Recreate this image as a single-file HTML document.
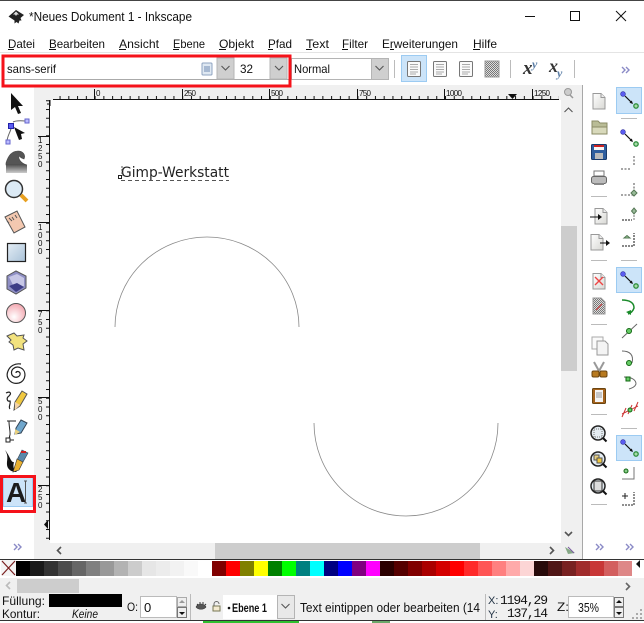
<!DOCTYPE html>
<html><head><meta charset="utf-8"><style>
html,body{margin:0;padding:0;width:644px;height:623px;overflow:hidden;background:#fff}
svg{display:block;filter:blur(.25px)}
text{font-family:"Liberation Sans",sans-serif;font-size:12px;fill:#111}
.m{font-size:12px}
.mono{font-family:"Liberation Mono",monospace;font-size:13px}
.r{font-size:8px;fill:#111}
</style></head><body>
<svg width="644" height="623" viewBox="0 0 644 623" xmlns="http://www.w3.org/2000/svg">
<defs>
<pattern id="tx" patternUnits="userSpaceOnUse" x="7" y="0" width="8.76" height="623"><rect x="0" y="96" width="1" height="3" fill="#111"/></pattern>
<pattern id="ty" patternUnits="userSpaceOnUse" x="0" y="4" width="644" height="8.75"><rect x="46" y="0" width="3" height="1" fill="#111"/></pattern>
<pattern id="chk" patternUnits="userSpaceOnUse" width="2" height="2"><rect width="2" height="2" fill="#ddd"/><rect width="1" height="1" fill="#777"/><rect x="1" y="1" width="1" height="1" fill="#777"/></pattern>
<linearGradient id="g1" x1="0" y1="0" x2="1" y2="1"><stop offset="0" stop-color="#fff"/><stop offset="1" stop-color="#d8d8d4"/></linearGradient>
<linearGradient id="g2" x1="0" y1="0" x2="1" y2="1"><stop offset="0" stop-color="#e4edf5"/><stop offset="1" stop-color="#a9c2d8"/></linearGradient>
<linearGradient id="g3" x1="0" y1="0" x2="0" y2="1"><stop offset="0" stop-color="#555"/><stop offset="1" stop-color="#ccc"/></linearGradient>
<radialGradient id="g4" cx=".4" cy=".7" r=".8"><stop offset="0" stop-color="#fff"/><stop offset="1" stop-color="#f29ca6"/></radialGradient>
<g id="cc"><path d="M0 0l3 3-3 3M4 0l3 3-3 3" fill="none" stroke="#8a8ac6" stroke-width="1.4"/></g>
<g id="chev"><path d="M-4 -2l4 4 4-4" fill="none" stroke="#555" stroke-width="1.1"/></g>
<g id="align"><rect x="-6.500" y="-7.500" width="13" height="15" rx="1" fill="#fafafa" stroke="#777"/><path d="M-4-4.500h8M-4-2h8M-4 .5h8M-4 3h8M-4 5h6" stroke="#aaa"/></g>
<g id="nd"><circle cx="-6" cy="-6" r="2.400" fill="#5a5cf0" stroke="#3535a0" stroke-width=".6"/><path d="M-4-4L3 3" stroke="#111" stroke-width="1.200"/><path d="M4 4L.5 2.800 2.800 .5z" fill="#111"/><circle cx="7" cy="6" r="2.200" fill="#a8dca8" stroke="#2f8f3f" stroke-width="1.300"/></g>
<g id="mg"><circle r="7" fill="#e4ecf2" stroke="#222" stroke-width="1.500"/><path d="M5 5l3.500 3.500" stroke="#111" stroke-width="2"/></g>
<g id="doc"><path d="M-6-7.500h8l4 4v11.500h-12z" fill="url(#g1)" stroke="#999"/><path d="M2-7.500v4h4" fill="#eee" stroke="#999"/></g>
</defs>

<!-- chrome -->
<rect x="0" y="0" width="644" height="1" fill="#444"/>
<!-- title -->
<path d="M16 10l8 5-3.500 3 1 2.500-2 0-1 3-2-1.500-2 1.500 0-3-3-2-3-2z" fill="#222"/><path d="M16 11.500l3 3-2 0-1 1.500-1-1.500-2 0z" fill="#ddd"/>
<text x="29" y="21" font-size="13" style="font-size:13px" textLength="163" lengthAdjust="spacingAndGlyphs">*Neues Dokument 1 - Inkscape</text>
<path d="M525 16.500h10" stroke="#111"/><rect x="570.500" y="11.500" width="9" height="9" fill="none" stroke="#111"/><path d="M616 11l10 10M626 11l-10 10" stroke="#111"/>
<!-- menu -->
<g class="m">
<text x="8" y="48" textLength="27" lengthAdjust="spacingAndGlyphs">Datei</text>
<text x="49" y="48" textLength="56" lengthAdjust="spacingAndGlyphs">Bearbeiten</text>
<text x="119" y="48" textLength="40" lengthAdjust="spacingAndGlyphs">Ansicht</text>
<text x="173" y="48" textLength="32" lengthAdjust="spacingAndGlyphs">Ebene</text>
<text x="219" y="48" textLength="35" lengthAdjust="spacingAndGlyphs">Objekt</text>
<text x="268" y="48" textLength="24" lengthAdjust="spacingAndGlyphs">Pfad</text>
<text x="306" y="48" textLength="23" lengthAdjust="spacingAndGlyphs">Text</text>
<text x="342" y="48" textLength="26" lengthAdjust="spacingAndGlyphs">Filter</text>
<text x="382" y="48" textLength="76" lengthAdjust="spacingAndGlyphs">Erweiterungen</text>
<text x="473" y="48" textLength="24" lengthAdjust="spacingAndGlyphs">Hilfe</text>
</g>
<path d="M8 49.500h6M49 49.500h7M119 49.500h7M173 49.500h6M219 49.500h7M268 49.500h5M306 49.500h6M342 49.500h6M390 49.500h4M473 49.500h7" stroke="#111"/>
<rect x="0" y="52" width="644" height="1" fill="#e4e4e4"/>

<!-- text toolbar -->
<rect x="5" y="58" width="212" height="21" fill="#fff"/>
<rect x="4" y="79" width="285" height="1" fill="#aaa"/>
<text x="7" y="73" textLength="49" lengthAdjust="spacingAndGlyphs">sans-serif</text>
<rect x="202" y="63" width="10" height="12" rx="1" fill="#dfe8f2" stroke="#8fa3c0"/><path d="M204 67h6M204 69h6M204 71h6" stroke="#6f8ab2"/>
<rect x="217" y="58" width="17" height="21" fill="#cfcfcf" stroke="#b4b4b4"/><use href="#chev" x="225.500" y="68"/>
<text x="240" y="73" textLength="13" lengthAdjust="spacingAndGlyphs">32</text>
<rect x="270" y="58" width="17" height="21" fill="#cfcfcf" stroke="#b4b4b4"/><use href="#chev" x="279" y="68"/>
<rect x="291.500" y="58.500" width="80" height="21" fill="#fff" stroke="#b4b4b4"/>
<text x="294" y="73" textLength="36" lengthAdjust="spacingAndGlyphs">Normal</text>
<rect x="371.500" y="58.500" width="17" height="21" fill="#cfcfcf" stroke="#b4b4b4"/><use href="#chev" x="379.500" y="68"/>
<rect x="394" y="60" width="1" height="18" fill="#bbb"/>
<rect x="401.500" y="55.500" width="25" height="26" fill="#cce4f9" stroke="#9ccbf2"/>
<use href="#align" x="414" y="69"/><use href="#align" x="440" y="69"/><use href="#align" x="466" y="69"/>
<rect x="485" y="61" width="14" height="16" fill="url(#chk)" stroke="#999"/>
<rect x="510" y="60" width="1" height="18" fill="#bbb"/>
<text x="523" y="74" style="font-family:'Liberation Serif',serif;font-size:19px;font-weight:bold;font-style:italic;fill:#333">x</text><text x="532" y="68" style="font-family:'Liberation Serif',serif;font-size:12px;font-weight:bold;font-style:italic;fill:#5a7da6">y</text>
<text x="549" y="72" style="font-family:'Liberation Serif',serif;font-size:18px;font-weight:bold;font-style:italic;fill:#333">x</text><text x="557" y="77" style="font-family:'Liberation Serif',serif;font-size:12px;font-weight:bold;font-style:italic;fill:#5a7da6">y</text>
<rect x="574" y="60" width="1" height="18" fill="#bbb"/>
<use href="#cc" x="622" y="67"/>

<!-- ruler bg -->
<rect x="34" y="85" width="527" height="15" fill="#f0f0f0"/>
<rect x="34" y="85" width="16" height="474" fill="#f0f0f0"/>
<rect x="50" y="100" width="511" height="443" fill="#fff"/>
<rect x="53" y="99" width="506" height="1" fill="#111"/>
<rect x="53" y="96" width="506" height="3" fill="url(#tx)"/>
<rect x="49" y="100" width="1" height="440" fill="#111"/>
<rect x="46" y="100" width="3" height="440" fill="url(#ty)"/>
<path d="M50 104h-3M50 100v6" stroke="#111" fill="none"/>
<g fill="#111">
<rect x="94" y="89" width="1" height="10"/><rect x="182" y="89" width="1" height="10"/><rect x="269" y="89" width="1" height="10"/><rect x="357" y="89" width="1" height="10"/><rect x="444" y="89" width="1" height="10"/><rect x="532" y="89" width="1" height="10"/>
<rect x="38" y="136" width="11" height="1"/><rect x="38" y="222" width="11" height="1"/><rect x="38" y="310" width="11" height="1"/><rect x="38" y="397" width="11" height="1"/><rect x="38" y="485" width="11" height="1"/>
</g>
<path d="M508 94h9l-4.500 5z" fill="#111"/>
<path d="M48 520v9l-4-4.500z" fill="#111"/>
<g class="r">
<text class="r" x="96" y="96">0</text><text class="r" x="184" y="96" textLength="12">250</text><text class="r" x="271" y="96" textLength="12">500</text><text class="r" x="359" y="96" textLength="12">750</text><text class="r" x="446" y="96" textLength="16">1000</text><text class="r" x="534" y="96" textLength="16">1250</text>
<text class="r" x="38" y="143">1</text><text class="r" x="38" y="151">2</text><text class="r" x="38" y="159">5</text><text class="r" x="38" y="167">0</text>
<text class="r" x="38" y="230">1</text><text class="r" x="38" y="238">0</text><text class="r" x="38" y="246">0</text><text class="r" x="38" y="254">0</text>
<text class="r" x="38" y="317">7</text><text class="r" x="38" y="325">5</text><text class="r" x="38" y="333">0</text>
<text class="r" x="38" y="404">5</text><text class="r" x="38" y="412">0</text><text class="r" x="38" y="420">0</text>
<text class="r" x="38" y="492">2</text><text class="r" x="38" y="500">5</text><text class="r" x="38" y="508">0</text>
</g>

<!-- canvas content -->
<path d="M115 327A92 90 0 0 1 299 327" fill="none" stroke="#888" stroke-width=".8"/>
<path d="M314 423A92 93 0 0 0 498 423" fill="none" stroke="#888" stroke-width=".8"/>
<text x="121" y="177" style="font-family:'DejaVu Sans',sans-serif;font-size:14px;fill:#222" textLength="108" lengthAdjust="spacingAndGlyphs">Gimp-Werkstatt</text>
<path d="M121 180.500h108" stroke="#555" stroke-dasharray="4 3"/>
<path d="M122 166v10" stroke="#555" stroke-dasharray="2 1"/>
<rect x="118.500" y="175.500" width="3" height="3" fill="#fff" stroke="#222"/>

<!-- scrollbars -->
<rect x="561" y="85" width="21" height="474" fill="#f0f0f0"/>
<rect x="561" y="226" width="16" height="145" fill="#cdcdcd"/>
<rect x="582" y="85" width="1" height="474" fill="#a8a8a8"/>
<circle cx="568" cy="92" r="3.500" fill="#ccc" stroke="#999"/><path d="M570 95l3 3" stroke="#999" stroke-width="1.500"/>
<use href="#chev" transform="translate(568.500 110) rotate(180)"/>
<path d="M565 532l3.500 3.500 3.500-3.500" fill="none" stroke="#555" stroke-width="1.600"/>
<rect x="0" y="543" width="34" height="16" fill="#fff"/>
<rect x="34" y="543" width="527" height="16" fill="#f0f0f0"/>
<rect x="215" y="543" width="265" height="16" fill="#cdcdcd"/>
<path d="M61 547l-3.500 3.500 3.500 3.500M550 547l3.500 3.500-3.500 3.500" fill="none" stroke="#555" stroke-width="1.600"/>
<path d="M565 547l3 7 7-1z" fill="#5a8a5a" opacity=".7"/><path d="M568 547l6 6" stroke="#7a5aa0"/>
<use href="#cc" x="14" y="544"/>
<use href="#cc" x="596" y="544"/><use href="#cc" x="626" y="544"/>

<!-- left tools -->
<path d="M11 93v17l4-3 3 7 3-1-3-7h5z" fill="#111"/>
<path d="M11 125C12 131 8 133 7 141M13 122C17 120 22 121 26 121" fill="none" stroke="#666"/>
<rect x="8.500" y="123.500" width="5" height="5" fill="#5a5cf0" stroke="#22a"/><rect x="6" y="140" width="4" height="4" fill="#bcbcff" stroke="#66c"/><rect x="25" y="119" width="4" height="4" fill="#bcbcff" stroke="#66c"/>
<path d="M14 127l11 6-4 1 1 5-3 1-2-5z" fill="#111"/>
<path d="M6 163C8 156 12 151 18 151C23 151 26 155 24 159C22 158 20 158 20 156C17 157 20 163 27 165V165H6z" fill="#555" stroke="#444" stroke-width=".6"/><rect x="6" y="165" width="21" height="8" fill="url(#g3)"/>
<circle cx="14" cy="189" r="8.500" fill="#dceaf5" stroke="#333" stroke-width="1.500"/><path d="M21 195l6 6" stroke="#e8a020" stroke-width="4"/>
<path d="M5 217l12-6 8 16-11 6z" fill="#f3c8b0" stroke="#555"/><path d="M9 218l3 3M12 217l2 3M15 215l2 3M7 221l2 2" stroke="#555"/>
<rect x="7.500" y="243.500" width="18" height="18" fill="url(#g2)" stroke="#222" stroke-width="1.200"/>
<path d="M16 271l10 5v12l-10 6-9-5V276z" fill="#8f8fc4" stroke="#555"/><path d="M9 277l8-3 7 4v8l-8 5z" fill="#c7c7e6"/><path d="M9 286l8-3 7 4-8 5z" fill="#3d3d86"/>
<circle cx="16" cy="313" r="9.500" fill="url(#g4)" stroke="#555"/>
<path d="M7 336l7-3 3 3 7-1-1 3 4 3-4 3 1 6-6-2-4 2-1-5-4-3 2-2z" fill="#f2e27e" stroke="#555"/>
<path d="M16 373c0-2 3-2 4 0 1 4-5 6-8 2-2-5 3-10 9-7 6 3 5 13-2 15-8 2-14-5-11-12 2-5 7-8 13-7" fill="none" stroke="#222" stroke-width="1.200"/>
<path d="M6 393c4-2 6 0 3 3-3 2-2 6 1 5 1 3-2 6 0 8" fill="none" stroke="#222" stroke-width="1.200"/><path d="M22 391l5 3-7 12-6 4 1-8z" fill="#f0c840" stroke="#555"/><path d="M15 402l5 3-5 5z" fill="#f3d3a8"/>
<path d="M7 421h9M9 421C9 430 12 434 8 440H14" fill="none" stroke="#222"/><rect x="6" y="438" width="4" height="4" fill="#fff" stroke="#222"/><path d="M21 420l6 3-6 10-6 1 1-6z" fill="#6fa6cc" stroke="#345"/><path d="M15 429l5 3-5 3z" fill="#e8d080"/>
<path d="M5 450c5 8 0 12 3 18 2 3 5 4 9 4-4-3-4-6-3-10-3 1-4-6-9-12z" fill="#111"/><path d="M22 450l6 3-5 9-6-2z" fill="#5a88aa" stroke="#345" stroke-width=".6"/><path d="M17 459l6 3-4 8-6 2z" fill="#e8b030" stroke="#333" stroke-width=".6"/><rect x="21" y="451" width="5" height="2" fill="#c22"/>

<!-- text tool -->
<rect x="3.500" y="477.500" width="29" height="29" fill="#cce4f9" stroke="#9ccbf2"/>
<text x="6" y="502" style="font-size:28px;font-weight:bold;fill:#1c1c1c;font-family:'Liberation Sans',sans-serif">A</text>
<path d="M24 481h3M24 503h3M25.500 481v22" stroke="#555" fill="none"/>
<rect x="1.500" y="476.500" width="33" height="35" fill="none" stroke="#f5121a" stroke-width="3"/>

<!-- right col 1 -->
<use href="#doc" x="599" y="101"/>
<path d="M592 121h6l2 2h7v5h-15z" fill="#b9bc96" stroke="#8a8b66"/><path d="M592 127h15v7h-15z" fill="#d8d9bb" stroke="#8a8b66"/>
<rect x="591.500" y="144.500" width="15" height="15" rx="1" fill="#2f5e9e" stroke="#1a3a6a"/><rect x="594" y="145" width="10" height="5" fill="#f6f6f6"/><rect x="594" y="145" width="10" height="2" fill="#c22"/><rect x="595" y="153" width="8" height="6" fill="#bbb"/>
<rect x="594" y="171" width="10" height="5" fill="#fff" stroke="#777"/><rect x="591.500" y="176.500" width="15" height="7" rx="2" fill="#bbb" stroke="#666"/><rect x="594" y="183" width="10" height="2" fill="#888"/>
<rect x="591" y="196" width="16" height="1" fill="#bbb"/>
<use href="#doc" x="601" y="216"/><path d="M590 217h11" stroke="#111"/><path d="M602 217l-4-3v6z" fill="#111"/>
<use href="#doc" x="597" y="242"/><path d="M600 243h9" stroke="#111"/><path d="M610 243l-4-3v6z" fill="#111"/>
<rect x="591" y="260" width="16" height="1" fill="#bbb"/>
<use href="#doc" x="599" y="281"/><path d="M595 277l8 8M603 277l-8 8" stroke="#e44" stroke-width="1.400"/>
<path d="M593 298h8l4 4v12h-12z" fill="url(#chk)" stroke="#999"/><path d="M596 310l6-6" stroke="#d44"/>
<rect x="591" y="324" width="16" height="1" fill="#bbb"/>
<rect x="592" y="337" width="11" height="12" fill="#fafafa" stroke="#aaa"/><path d="M597 341h8l3 3v11h-11z" fill="#f4f4f4" stroke="#999"/>
<path d="M594 362l5 9M604 362l-5 9" stroke="#999" stroke-width="2"/><rect x="592" y="371" width="7" height="6" rx="1.500" fill="#b7791f" stroke="#6b4510"/><rect x="600" y="371" width="7" height="6" rx="1.500" fill="#b7791f" stroke="#6b4510"/>
<rect x="592.500" y="388.500" width="13" height="15" rx="1" fill="#a5631d" stroke="#6b4510"/><rect x="595" y="390" width="8" height="12" fill="#f4f4f4"/><path d="M596 393h6M596 395h6M596 397h6" stroke="#999"/>
<rect x="591" y="414" width="16" height="1" fill="#bbb"/>
<use href="#mg" x="598" y="433"/><rect x="594" y="429" width="8" height="8" fill="none" stroke="#777" stroke-dasharray="1 1"/>
<use href="#mg" x="598" y="459"/><rect x="594" y="455" width="5" height="5" fill="#e8d080" stroke="#555"/><rect x="597" y="458" width="5" height="5" fill="#f0c840" stroke="#555"/>
<use href="#mg" x="598" y="486"/><rect x="594" y="481" width="8" height="10" fill="#ddd" stroke="#333"/>
<rect x="591" y="504" width="16" height="1" fill="#bbb"/>

<!-- right col 2 -->
<rect x="616.500" y="87.500" width="25" height="26" fill="#cce4f9" stroke="#9ccbf2"/><use href="#nd" x="629" y="100"/>
<rect x="621" y="118" width="16" height="1" fill="#bbb"/>
<use href="#nd" x="629" y="138"/>
<path d="M621 169h10M634 156v10" stroke="#888" stroke-width="1.500" stroke-dasharray="2 1.500"/>
<path d="M621 195h12M634 183v10" stroke="#888" stroke-width="1.500" stroke-dasharray="2 1.500"/><path d="M634 190l3 3-3 3-3-3z" fill="#9b9" stroke="#575"/>
<path d="M622 220h10" stroke="#111" stroke-dasharray="2 1"/><path d="M634 212v8" stroke="#777" stroke-dasharray="2 1"/><path d="M634 208l2.500 3-2.500 3-2.500-3z" fill="#9b9" stroke="#575"/>
<path d="M622 246h12v-13" fill="none" stroke="#111" stroke-dasharray="2 1"/><path d="M624 238l3-2.500 3 2.500z" fill="#9c9" stroke="#575"/>
<rect x="621" y="260" width="16" height="1" fill="#bbb"/>
<rect x="616.500" y="267.500" width="25" height="25" fill="#cce4f9" stroke="#9ccbf2"/><use href="#nd" x="629" y="280"/>
<path d="M622 300c8 0 12 3 12 8-1 3-3 5-6 6" fill="none" stroke="#1a8a2a" stroke-width="1.500"/><path d="M626 312l5-2v5z" fill="#1a8a2a"/>
<path d="M622 338l15-14" stroke="#666"/><circle cx="629" cy="331" r="2.500" fill="#6c6" stroke="#161"/>
<path d="M622 351c8 0 12 4 10 12" fill="none" stroke="#666"/><circle cx="629" cy="363" r="2.500" fill="#6c6" stroke="#161"/>
<path d="M624 377c8 0 12 3 12 7-1 3-4 4-7 5" fill="none" stroke="#666"/><rect x="626" y="377" width="4" height="4" fill="#6c6" stroke="#161"/>
<path d="M622 417l4-9M628 414l4-9M634 411l4-9M622 414l16-8" stroke="#c33" fill="none"/><circle cx="630" cy="410" r="2" fill="#6c6" stroke="#161"/>
<rect x="621" y="428" width="16" height="1" fill="#bbb"/>
<rect x="616.500" y="435.500" width="25" height="25" fill="#cce4f9" stroke="#9ccbf2"/><use href="#nd" x="629" y="448"/>
<circle cx="626" cy="471" r="2" fill="#8c8" stroke="#161"/><path d="M622 479h12v-12" fill="none" stroke="#777"/>
<path d="M622 496h6M625 493v6" stroke="#222"/><path d="M622 505h12v-13" fill="none" stroke="#222" stroke-dasharray="2 1"/>

<!-- palette -->
<rect x="0" y="559" width="644" height="1" fill="#333"/>
<rect x="1" y="560" width="15" height="16" fill="#f4f4f4"/><path d="M2 561l13 14M15 561l-13 14" stroke="#7a1f1f" stroke-width="1.200"/>
<g>
<rect x="16" y="561" width="14" height="15" fill="#000"/><rect x="30" y="561" width="14" height="15" fill="#1a1a1a"/><rect x="44" y="561" width="14" height="15" fill="#333"/><rect x="58" y="561" width="14" height="15" fill="#4d4d4d"/><rect x="72" y="561" width="14" height="15" fill="#666"/><rect x="86" y="561" width="14" height="15" fill="#808080"/><rect x="100" y="561" width="14" height="15" fill="#999"/><rect x="114" y="561" width="14" height="15" fill="#b3b3b3"/><rect x="128" y="561" width="14" height="15" fill="#ccc"/><rect x="142" y="561" width="14" height="15" fill="#e6e6e6"/><rect x="156" y="561" width="14" height="15" fill="#ececec"/><rect x="170" y="561" width="14" height="15" fill="#f2f2f2"/><rect x="184" y="561" width="14" height="15" fill="#f9f9f9"/><rect x="198" y="561" width="14" height="15" fill="#fff"/><rect x="212" y="561" width="14" height="15" fill="#800000"/><rect x="226" y="561" width="14" height="15" fill="#f00"/><rect x="240" y="561" width="14" height="15" fill="#808000"/><rect x="254" y="561" width="14" height="15" fill="#ff0"/><rect x="268" y="561" width="14" height="15" fill="#008000"/><rect x="282" y="561" width="14" height="15" fill="#0f0"/><rect x="296" y="561" width="14" height="15" fill="#008080"/><rect x="310" y="561" width="14" height="15" fill="#0ff"/><rect x="324" y="561" width="14" height="15" fill="#000080"/><rect x="338" y="561" width="14" height="15" fill="#00f"/><rect x="352" y="561" width="14" height="15" fill="#800080"/><rect x="366" y="561" width="14" height="15" fill="#f0f"/><rect x="380" y="561" width="14" height="15" fill="#2b0000"/><rect x="394" y="561" width="14" height="15" fill="#500"/><rect x="408" y="561" width="14" height="15" fill="#800000"/><rect x="422" y="561" width="14" height="15" fill="#a00"/><rect x="436" y="561" width="14" height="15" fill="#d40000"/><rect x="450" y="561" width="14" height="15" fill="#f00"/><rect x="464" y="561" width="14" height="15" fill="#ff2a2a"/><rect x="478" y="561" width="14" height="15" fill="#f55"/><rect x="492" y="561" width="14" height="15" fill="#ff8080"/><rect x="506" y="561" width="14" height="15" fill="#faa"/><rect x="520" y="561" width="14" height="15" fill="#fcd5d5"/><rect x="534" y="561" width="14" height="15" fill="#280b0b"/><rect x="548" y="561" width="14" height="15" fill="#501616"/><rect x="562" y="561" width="14" height="15" fill="#782121"/><rect x="576" y="561" width="14" height="15" fill="#a02c2c"/><rect x="590" y="561" width="14" height="15" fill="#c83737"/><rect x="604" y="561" width="14" height="15" fill="#d35f5f"/><rect x="618" y="561" width="14" height="15" fill="#de8787"/>
</g>
<path d="M640 560v8l-4-4z" fill="#111"/>
<rect x="0" y="576" width="644" height="2" fill="#fff"/>
<!-- palette scrollbar + status bg -->
<rect x="0" y="578" width="644" height="42" fill="#f0f0f0"/>
<rect x="17" y="579" width="62" height="14" fill="#cdcdcd"/>
<path d="M10 582l-3.500 3.500 3.500 3.500" fill="none" stroke="#bbb" stroke-width="1.600"/>
<path d="M626 583l3.500 3.500-3.500 3.500" fill="none" stroke="#666" stroke-width="1.600"/>

<!-- status -->
<text x="2" y="605" textLength="43" lengthAdjust="spacingAndGlyphs">Füllung:</text>
<text x="2" y="618" textLength="38" lengthAdjust="spacingAndGlyphs">Kontur:</text>
<rect x="49" y="594" width="73" height="13" fill="#000"/>
<text x="72" y="618" style="font-style:italic" textLength="26" lengthAdjust="spacingAndGlyphs">Keine</text>
<text x="127" y="611" textLength="11" lengthAdjust="spacingAndGlyphs">O:</text>
<rect x="140.500" y="596.500" width="36" height="21" fill="#fff" stroke="#bbb"/>
<text x="144" y="612" style="font-size:13px">0</text>
<rect x="177.500" y="597.500" width="9" height="9" fill="#eee" stroke="#aaa"/><rect x="177.500" y="607.500" width="9" height="10" fill="#eee" stroke="#777"/>
<path d="M182 600l-3 3h6z" fill="#999"/><path d="M182 615l-3-3h6z" fill="#111"/>
<rect x="190" y="594" width="1" height="26" fill="#bbb"/>
<path d="M196 607c2-4 8-4 10 0-2 3-8 3-10 0z" fill="#555" stroke="#333" stroke-width=".6"/><path d="M197 604l1 1M200 602v2M203 602v2M206 604l-1 1" stroke="#333"/>
<rect x="213" y="606" width="7" height="5" fill="#f3ead0" stroke="#775"/><path d="M214 606v-2a2.500 2.500 0 0 1 5 0" fill="none" stroke="#666"/>
<rect x="223" y="595" width="54" height="24" fill="#fff"/>
<circle cx="229" cy="608" r="1.300" fill="#111"/>
<text x="232" y="612" style="font-weight:bold;font-size:12px" textLength="35" lengthAdjust="spacingAndGlyphs">Ebene 1</text>
<rect x="277.500" y="595.500" width="17" height="23" fill="#e8e8e8" stroke="#b4b4b4"/><use href="#chev" x="285.500" y="606"/>
<text x="300" y="612" style="font-size:13px" textLength="180" lengthAdjust="spacingAndGlyphs">Text eintippen oder bearbeiten (14</text>
<rect x="485" y="594" width="1" height="26" fill="#bbb"/>
<text x="488" y="604" style="font-size:11px;fill:#234" >X:</text><text x="488" y="618" style="font-size:11px;fill:#234">Y:</text>
<text x="500" y="604" class="mono" textLength="48">1194,29</text>
<text x="507" y="617" class="mono" textLength="41">137,14</text>
<text x="557" y="611" textLength="12" lengthAdjust="spacingAndGlyphs">Z:</text>
<rect x="568.500" y="596.500" width="45" height="21" fill="#fff" stroke="#bbb"/>
<text x="578" y="612" style="font-size:13px" textLength="21" lengthAdjust="spacingAndGlyphs">35%</text>
<rect x="614.500" y="597.500" width="9" height="9" fill="#eee" stroke="#777"/><rect x="614.500" y="607.500" width="9" height="10" fill="#eee" stroke="#777"/>
<path d="M619 600l-3 3h6z" fill="#111"/><path d="M619 615l-3-3h6z" fill="#111"/>
<path d="M640 609h2v2h-2zM636 613h2v2h-2zM640 613h2v2h-2zM632 617h2v2h-2zM636 617h2v2h-2zM640 617h2v2h-2z" fill="#aaa"/>
<rect x="0" y="620" width="644" height="1" fill="#333"/>
<rect x="0" y="621" width="644" height="2" fill="#fff"/>
<rect x="203" y="621" width="96" height="2" fill="#2fc02f"/>
<rect x="372" y="621" width="18" height="2" fill="#6aa86a"/>

<!-- red rect on top -->
<rect x="3" y="56" width="287" height="30" fill="none" stroke="#f5121a" stroke-width="3"/>
</svg>
</body></html>
